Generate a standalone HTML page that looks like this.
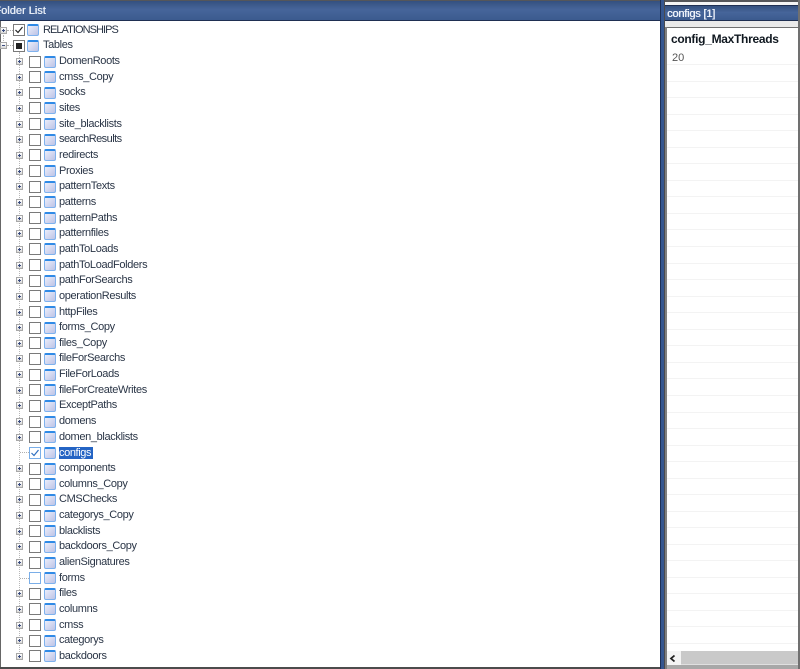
<!DOCTYPE html>
<html>
<head>
<meta charset="utf-8">
<style>
html,body{margin:0;padding:0;background:#fff}
#p{position:relative;width:800px;height:669px;overflow:hidden;background:#fff;font-family:"Liberation Sans",sans-serif;font-size:11px;color:#2a3546;filter:blur(.35px)}
.a{position:absolute}
#tree{position:absolute;left:0;top:21.2px;width:660px}
.r{position:relative;height:15.67px}
.e,.c,.i,.t,.h{position:absolute;display:block}
.e{left:16px;top:5.5px;width:5px;height:5px;border:1px solid #a8a8a8;background:linear-gradient(#fff,#d8d8d8)}
.e:before{content:"";position:absolute;left:1px;top:2px;width:3px;height:1px;background:#3a4c80}
.e:after{content:"";position:absolute;left:2px;top:1px;width:1px;height:3px;background:#3a4c80}
.m:after{display:none}
.h{left:22px;top:8.5px;width:7px;border-top:1px dotted #b0b0b0}
.c{left:29px;top:3px;width:10px;height:10px;border:1px solid #7a7a7a;background:#fff}
.i{left:44px;top:3px;width:10px;height:9px;border:1px solid #7fb2ee;border-top:2px solid #2f8ae6;border-radius:2px;background:linear-gradient(135deg,#eceefa,#bcc3e6)}
.t{left:59px;top:1.5px;line-height:14px;white-space:nowrap;letter-spacing:-.35px}
.s{background:#2464c4;color:#fff;padding:0;left:59px;top:3px;line-height:12px;width:34px;letter-spacing:-.4px}
.b{border-color:#7aaee8}
.root .e{left:0}.root .c{left:13px}.root .i{left:27px;width:10px}.root .t{left:43px}.root .h{left:7px;width:6px}
svg{position:absolute;left:0;top:0}
.g{position:absolute;left:667px;width:131px;height:1px;background:#f3f3f3}
</style>
</head>
<body>
<div id="p">
<!-- left header -->
<div class="a" style="left:0;top:0;width:660px;height:1px;background:#55565a"></div>
<div class="a" style="left:0;top:1px;width:660px;height:19px;background:linear-gradient(#34507f,#46659a 45%,#3b5a8e)"></div>
<div class="a" style="left:0;top:20px;width:660px;height:1px;background:#1f2f52"></div>
<div class="a" style="left:-5.7px;top:4px;color:#e6ecf6;line-height:14px;font-size:11px;text-shadow:.4px 0 0 #e6ecf6">Folder List</div>
<div class="a" style="left:0;top:21px;width:1px;height:646px;background:#666"></div>
<div class="a" style="left:0;top:667px;width:660px;height:2px;background:#4c4c4c"></div>
<!-- tree lines -->
<div class="a" style="left:19px;top:52px;height:600px;border-left:1px dotted #b8b8b8"></div>
<div class="a" style="left:3px;top:35px;height:8px;border-left:1px dotted #b8b8b8"></div>
<div id="tree">
<div class="r root"><span class="h"></span><span class="e"></span><span class="c"><svg width="10" height="10"><path d="M1.5 5 L4 7.5 L8.5 2" fill="none" stroke="#222" stroke-width="1.2"/></svg></span><span class="i"></span><span class="t" style="letter-spacing:-.95px">RELATIONSHIPS</span></div>
<div class="r root"><span class="h"></span><span class="e m"></span><span class="c"><span style="position:absolute;left:2px;top:2px;width:6px;height:6px;background:#222"></span></span><span class="i"></span><span class="t">Tables</span></div>
<div class="r"><span class="e"></span><span class="c"></span><span class="i"></span><span class="t">DomenRoots</span></div>
<div class="r"><span class="e"></span><span class="c"></span><span class="i"></span><span class="t">cmss_Copy</span></div>
<div class="r"><span class="e"></span><span class="c"></span><span class="i"></span><span class="t">socks</span></div>
<div class="r"><span class="e"></span><span class="c"></span><span class="i"></span><span class="t">sites</span></div>
<div class="r"><span class="e"></span><span class="c"></span><span class="i"></span><span class="t">site_blacklists</span></div>
<div class="r"><span class="e"></span><span class="c"></span><span class="i"></span><span class="t" style="letter-spacing:-.55px">searchResults</span></div>
<div class="r"><span class="e"></span><span class="c"></span><span class="i"></span><span class="t">redirects</span></div>
<div class="r"><span class="e"></span><span class="c"></span><span class="i"></span><span class="t">Proxies</span></div>
<div class="r"><span class="e"></span><span class="c"></span><span class="i"></span><span class="t">patternTexts</span></div>
<div class="r"><span class="e"></span><span class="c"></span><span class="i"></span><span class="t">patterns</span></div>
<div class="r"><span class="e"></span><span class="c"></span><span class="i"></span><span class="t">patternPaths</span></div>
<div class="r"><span class="e"></span><span class="c"></span><span class="i"></span><span class="t">patternfiles</span></div>
<div class="r"><span class="e"></span><span class="c"></span><span class="i"></span><span class="t">pathToLoads</span></div>
<div class="r"><span class="e"></span><span class="c"></span><span class="i"></span><span class="t">pathToLoadFolders</span></div>
<div class="r"><span class="e"></span><span class="c"></span><span class="i"></span><span class="t">pathForSearchs</span></div>
<div class="r"><span class="e"></span><span class="c"></span><span class="i"></span><span class="t">operationResults</span></div>
<div class="r"><span class="e"></span><span class="c"></span><span class="i"></span><span class="t">httpFiles</span></div>
<div class="r"><span class="e"></span><span class="c"></span><span class="i"></span><span class="t">forms_Copy</span></div>
<div class="r"><span class="e"></span><span class="c"></span><span class="i"></span><span class="t">files_Copy</span></div>
<div class="r"><span class="e"></span><span class="c"></span><span class="i"></span><span class="t">fileForSearchs</span></div>
<div class="r"><span class="e"></span><span class="c"></span><span class="i"></span><span class="t">FileForLoads</span></div>
<div class="r"><span class="e"></span><span class="c"></span><span class="i"></span><span class="t">fileForCreateWrites</span></div>
<div class="r"><span class="e"></span><span class="c"></span><span class="i"></span><span class="t">ExceptPaths</span></div>
<div class="r"><span class="e"></span><span class="c"></span><span class="i"></span><span class="t">domens</span></div>
<div class="r"><span class="e"></span><span class="c"></span><span class="i"></span><span class="t">domen_blacklists</span></div>
<div class="r"><span class="h" style="left:20px;width:9px"></span><span class="c b"><svg width="10" height="10"><path d="M1.5 5 L4 7.5 L8.5 2" fill="none" stroke="#2f6fc0" stroke-width="1.2"/></svg></span><span class="i"></span><span class="t s">configs</span></div>
<div class="r"><span class="e"></span><span class="c"></span><span class="i"></span><span class="t">components</span></div>
<div class="r"><span class="e"></span><span class="c"></span><span class="i"></span><span class="t">columns_Copy</span></div>
<div class="r"><span class="e"></span><span class="c"></span><span class="i"></span><span class="t">CMSChecks</span></div>
<div class="r"><span class="e"></span><span class="c"></span><span class="i"></span><span class="t">categorys_Copy</span></div>
<div class="r"><span class="e"></span><span class="c"></span><span class="i"></span><span class="t">blacklists</span></div>
<div class="r"><span class="e"></span><span class="c"></span><span class="i"></span><span class="t">backdoors_Copy</span></div>
<div class="r"><span class="e"></span><span class="c"></span><span class="i"></span><span class="t">alienSignatures</span></div>
<div class="r"><span class="h" style="left:20px;width:9px"></span><span class="c b"></span><span class="i"></span><span class="t">forms</span></div>
<div class="r"><span class="e"></span><span class="c"></span><span class="i"></span><span class="t">files</span></div>
<div class="r"><span class="e"></span><span class="c"></span><span class="i"></span><span class="t">columns</span></div>
<div class="r"><span class="e"></span><span class="c"></span><span class="i"></span><span class="t">cmss</span></div>
<div class="r"><span class="e"></span><span class="c"></span><span class="i"></span><span class="t">categorys</span></div>
<div class="r"><span class="e"></span><span class="c"></span><span class="i"></span><span class="t">backdoors</span></div>
</div>
<!-- splitter -->
<div class="a" style="left:660px;top:0;width:1px;height:669px;background:#1d2f55"></div>
<div class="a" style="left:661px;top:0;width:3px;height:669px;background:#35568f"></div>
<div class="a" style="left:664px;top:0;width:1px;height:669px;background:#4a4a4e"></div>
<!-- right panel -->
<div class="a" style="left:665px;top:0;width:135px;height:2px;background:#55565a"></div>
<div class="a" style="left:665px;top:2px;width:135px;height:3px;background:#f4f4f4"></div>
<div class="a" style="left:665px;top:5px;width:135px;height:1px;background:#1f2f52"></div>
<div class="a" style="left:665px;top:6px;width:135px;height:14px;background:linear-gradient(#34507f,#46659a 45%,#3b5a8e)"></div>
<div class="a" style="left:665px;top:20px;width:135px;height:1px;background:#1f2f52"></div>
<div class="a" style="left:667px;top:7px;color:#eef2fa;line-height:14px;font-size:11px;letter-spacing:-.2px;text-shadow:.4px 0 0 #eef2fa">configs [1]</div>
<div class="a" style="left:665px;top:21px;width:135px;height:6px;background:#eaeaea"></div>
<div class="a" style="left:665px;top:27px;width:135px;height:1px;background:#707070"></div>
<div class="a" style="left:665px;top:27px;width:2px;height:642px;background:#808080"></div>
<div class="a" style="left:671px;top:32px;font-weight:bold;font-size:12px;letter-spacing:-.3px;line-height:15px;color:#101820">config_MaxThreads</div>
<div class="a" style="left:672px;top:52px;font-size:11px;line-height:13px;color:#555">20</div>
<div id="g">
<div class="g" style="top:64px"></div><div class="g" style="top:81px"></div><div class="g" style="top:97px"></div><div class="g" style="top:114px"></div><div class="g" style="top:130px"></div><div class="g" style="top:147px"></div><div class="g" style="top:163px"></div><div class="g" style="top:180px"></div><div class="g" style="top:196px"></div><div class="g" style="top:213px"></div><div class="g" style="top:229px"></div><div class="g" style="top:246px"></div><div class="g" style="top:263px"></div><div class="g" style="top:279px"></div><div class="g" style="top:296px"></div><div class="g" style="top:312px"></div><div class="g" style="top:329px"></div><div class="g" style="top:345px"></div><div class="g" style="top:362px"></div><div class="g" style="top:378px"></div><div class="g" style="top:395px"></div><div class="g" style="top:412px"></div><div class="g" style="top:428px"></div><div class="g" style="top:445px"></div><div class="g" style="top:461px"></div><div class="g" style="top:478px"></div><div class="g" style="top:494px"></div><div class="g" style="top:511px"></div><div class="g" style="top:527px"></div><div class="g" style="top:544px"></div><div class="g" style="top:560px"></div><div class="g" style="top:577px"></div><div class="g" style="top:593px"></div><div class="g" style="top:610px"></div><div class="g" style="top:626px"></div><div class="g" style="top:643px"></div>
</div>
<!-- scrollbar -->
<div class="a" style="left:667px;top:651px;width:14px;height:14px;background:#f4f4f4"></div>
<svg style="left:669px;top:654px;position:absolute" width="8" height="9"><path d="M5.5 1.5 L2 4.5 L5.5 7.5" fill="none" stroke="#222" stroke-width="1.8"/></svg>
<div class="a" style="left:681px;top:651px;width:117px;height:13px;background:#c9c9c9"></div>
<div class="a" style="left:681px;top:664px;width:117px;height:1px;background:#e0e0e0"></div>
<div class="a" style="left:667px;top:665px;width:131px;height:4px;background:#a8a8a8"></div>
<div class="a" style="left:798px;top:0;width:2px;height:669px;background:#707070"></div>
</div>
</body>
</html>
